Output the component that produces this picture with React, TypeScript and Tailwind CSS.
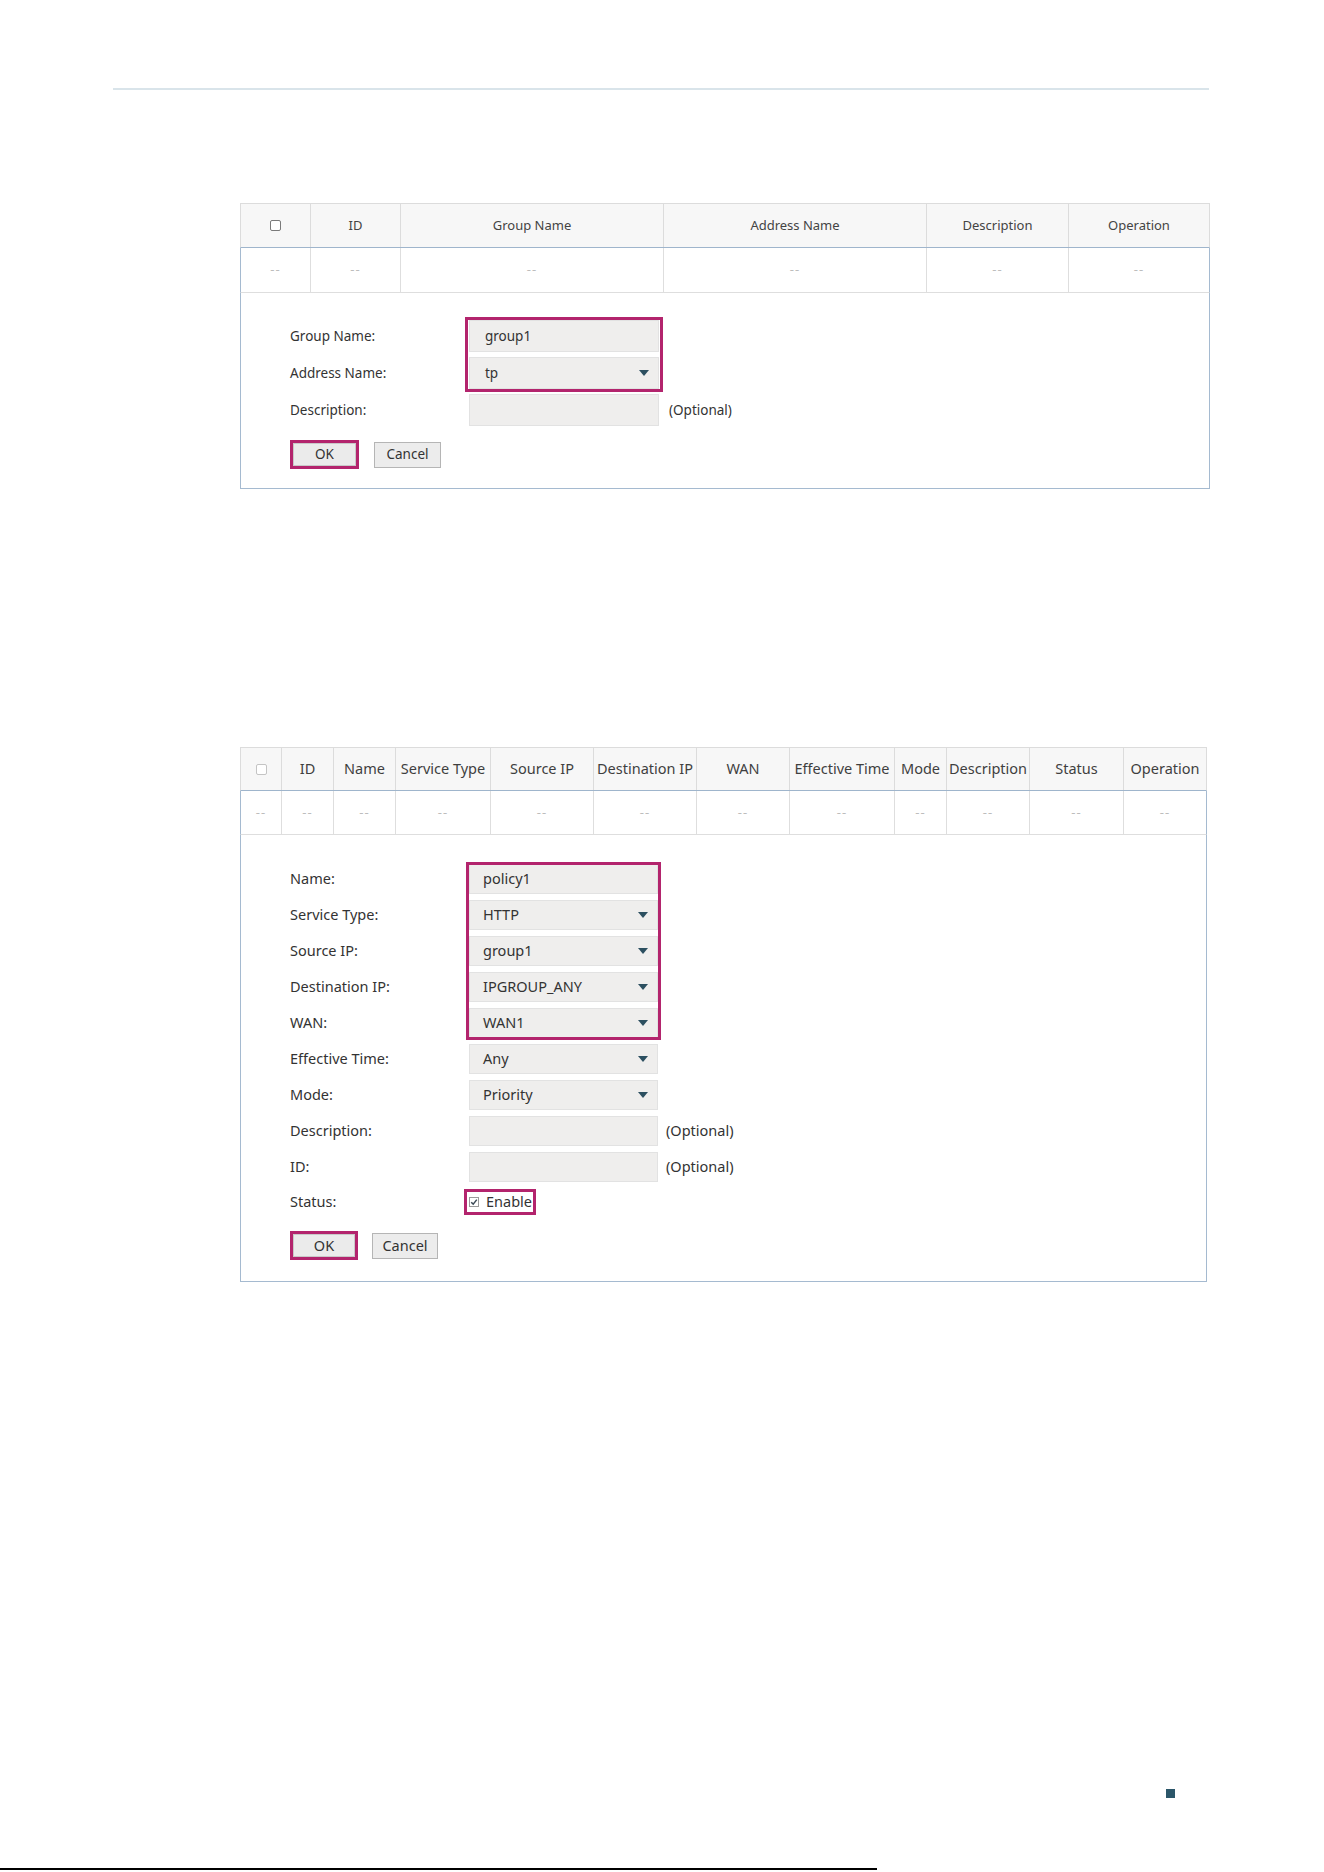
import React from "react";

const PINK = "border-[#b3246d]";

function Caret() {
  return (
    <svg width="10" height="6" viewBox="0 0 10 6" className="shrink-0">
      <polygon points="0,0 10,0 5,6" fill="#2c4f60" />
    </svg>
  );
}

function Field({
  value,
  select,
  w,
  h,
  pl,
}: {
  value?: string;
  select?: boolean;
  w: string;
  h: string;
  pl: string;
}) {
  return (
    <div
      className={`${w} ${h} ${pl} pr-[9px] flex items-center justify-between bg-[#efeeed] border border-[#e2e2e2] text-[#333]`}
    >
      <span>{value ?? ""}</span>
      {select ? <Caret /> : null}
    </div>
  );
}

function Label({ text }: { text: string }) {
  return <div className="flex items-center text-[#333] whitespace-nowrap">{text}</div>;
}

function Buttons({ okW, okH, cW, cH, gap }: { okW: string; okH: string; cW: string; cH: string; gap: string }) {
  return (
    <div className={`flex items-center ${gap}`}>
      <div className={`${okW} ${okH} border-[3px] ${PINK} flex`}>
        <div className="flex-1 flex items-center justify-center bg-[#ebebeb] border border-[#c9c9c9] text-[#333]">
          OK
        </div>
      </div>
      <div
        className={`${cW} ${cH} flex items-center justify-center bg-[#ececec] border border-[#b5b5b5] text-[#333]`}
      >
        Cancel
      </div>
    </div>
  );
}

function HeaderBox({ light }: { light?: boolean }) {
  return (
    <div
      className={`w-[11px] h-[11px] rounded-[2px] bg-white border ${
        light ? "border-[#c4c4c4]" : "border-[#7a7a7a]"
      }`}
    />
  );
}

function Dash() {
  return <span className="tracking-[1px]">--</span>;
}

function AddressGroupTable() {
  const heads = ["ID", "Group Name", "Address Name", "Description", "Operation"];
  return (
    <div className="ml-[240px] mt-[113px] w-[970px] text-[13px]">
      <div className="grid grid-cols-[70px_90px_263px_263px_142px_1fr] h-[45px] border border-[#dcdcdc] border-b-[#9fb5cc] bg-[#f7f7f7] text-[#444]">
        <div className="flex items-center justify-center border-r border-[#dcdcdc]">
          <HeaderBox />
        </div>
        {heads.map((h, i) => (
          <div
            key={h}
            className={`flex items-center justify-center ${i < heads.length - 1 ? "border-r border-[#dcdcdc]" : ""}`}
          >
            {h}
          </div>
        ))}
      </div>
      <div className="grid grid-cols-[70px_90px_263px_263px_142px_1fr] h-[45px] border-x border-b border-x-[#a5bad0] border-b-[#dedede] text-[#bdbdbd] text-[13px]">
        {Array.from({ length: 6 }).map((_, i) => (
          <div
            key={i}
            className={`flex items-center justify-center ${i < 5 ? "border-r border-[#dedede]" : ""}`}
          >
            <Dash />
          </div>
        ))}
      </div>
      <div className="border-x border-b border-[#a5bad0] pl-[49px] pt-[27px] pb-[19px] text-[13.5px]">
        <div className="grid grid-cols-[179px_190px_auto] grid-rows-[32px_32px_32px] gap-y-[5px]">
          <div className="col-start-1 row-start-1 flex"><Label text="Group Name:" /></div>
          <div className="col-start-2 row-start-1"><Field w="w-[190px]" h="h-[32px]" pl="pl-[15px]" value="group1" /></div>
          <div className="col-start-1 row-start-2 flex"><Label text="Address Name:" /></div>
          <div className="col-start-2 row-start-2"><Field w="w-[190px]" h="h-[32px]" pl="pl-[15px]" value="tp" select /></div>
          <div className={`col-start-2 row-start-1 row-span-2 -mx-[4px] -my-[3px] border-[3px] ${PINK} pointer-events-none`} />
          <div className="col-start-1 row-start-3 flex"><Label text="Description:" /></div>
          <div className="col-start-2 row-start-3"><Field w="w-[190px]" h="h-[32px]" pl="pl-[15px]" /></div>
          <div className="col-start-3 row-start-3 flex items-center pl-[10px] text-[#333]">(Optional)</div>
        </div>
        <div className="mt-[14px]">
          <Buttons okW="w-[69px]" okH="h-[29px]" cW="w-[67px]" cH="h-[26px]" gap="gap-[15px]" />
        </div>
      </div>
    </div>
  );
}

function PolicyTable() {
  const heads = [
    "ID",
    "Name",
    "Service Type",
    "Source IP",
    "Destination IP",
    "WAN",
    "Effective Time",
    "Mode",
    "Description",
    "Status",
    "Operation",
  ];
  const cols = "grid-cols-[41px_52px_62px_95px_103px_103px_93px_105px_52px_83px_94px_1fr]";
  const rows: { label: string; value?: string; select?: boolean; optional?: boolean }[] = [
    { label: "Name:", value: "policy1" },
    { label: "Service Type:", value: "HTTP", select: true },
    { label: "Source IP:", value: "group1", select: true },
    { label: "Destination IP:", value: "IPGROUP_ANY", select: true },
    { label: "WAN:", value: "WAN1", select: true },
    { label: "Effective Time:", value: "Any", select: true },
    { label: "Mode:", value: "Priority", select: true },
    { label: "Description:", optional: true },
    { label: "ID:", optional: true },
  ];
  return (
    <div className="ml-[240px] mt-[258px] w-[967px] text-[14.5px]">
      <div className={`grid ${cols} h-[44px] border border-[#dcdcdc] border-b-[#9fb5cc] bg-[#f7f7f7] text-[#3f3f3f]`}>
        <div className="flex items-center justify-center border-r border-[#dcdcdc]">
          <HeaderBox light />
        </div>
        {heads.map((h, i) => (
          <div
            key={h}
            className={`flex items-center justify-center whitespace-nowrap ${
              i < heads.length - 1 ? "border-r border-[#dcdcdc]" : ""
            }`}
          >
            {h}
          </div>
        ))}
      </div>
      <div className={`grid ${cols} h-[44px] border-x border-b border-x-[#a5bad0] border-b-[#dedede] text-[#bdbdbd] text-[13px]`}>
        {Array.from({ length: 12 }).map((_, i) => (
          <div
            key={i}
            className={`flex items-center justify-center ${i < 11 ? "border-r border-[#dedede]" : ""}`}
          >
            <Dash />
          </div>
        ))}
      </div>
      <div className="border-x border-b border-[#a5bad0] pl-[49px] pt-[29px] pb-[21px]">
        <div className="grid grid-cols-[179px_189px_auto] grid-rows-[repeat(9,30px)_28px] gap-y-[6px]">
          {rows.map((r, i) => (
            <React.Fragment key={r.label}>
              <div className="col-start-1 flex" style={{ gridRowStart: i + 1 }}>
                <Label text={r.label} />
              </div>
              <div className="col-start-2" style={{ gridRowStart: i + 1 }}>
                <Field w="w-[189px]" h="h-[30px]" pl="pl-[13px]" value={r.value} select={r.select} />
              </div>
              {r.optional ? (
                <div className="col-start-3 flex items-center pl-[8px] text-[#333]" style={{ gridRowStart: i + 1 }}>
                  (Optional)
                </div>
              ) : null}
            </React.Fragment>
          ))}
          <div className={`col-start-2 row-start-1 row-span-5 -mx-[3px] -my-[2px] border-[3px] ${PINK} pointer-events-none`} />
          <div className="col-start-1 row-start-10 flex">
            <Label text="Status:" />
          </div>
          <div className="col-start-2 row-start-10 flex items-center">
            <div className={`-ml-[5px] h-[26px] flex items-center gap-[7px] border-[3px] ${PINK} pl-[2px] pr-[1px] text-[#333]`}>
              <div className="w-[10px] h-[10px] border border-[#9a9a9a] bg-white flex items-center justify-center">
                <svg width="8" height="8" viewBox="0 0 8 8">
                  <path d="M1.2 4.2 L3.2 6.1 L6.8 1.6" stroke="#3d4b57" strokeWidth="1.5" fill="none" />
                </svg>
              </div>
              <span>Enable</span>
            </div>
          </div>
        </div>
        <div className="mt-[15px]">
          <Buttons okW="w-[68px]" okH="h-[29px]" cW="w-[66px]" cH="h-[26px]" gap="gap-[14px]" />
        </div>
      </div>
    </div>
  );
}

export default function App() {
  return (
    <div
      className="w-[1324px] h-[1872px] bg-white flex flex-col overflow-hidden"
      style={{ fontFamily: '"Noto Sans", "DejaVu Sans", sans-serif' }}
    >
      <div className="mt-[88px] ml-[113px] w-[1096px] h-[2px] bg-[#d9e4ea]" />
      <AddressGroupTable />
      <PolicyTable />
      <div className="mt-[507px] ml-[1166px] w-[9px] h-[9px] bg-[#2b5669]" />
      <div className="mt-[70px] w-[877px] h-[2px] bg-black" />
    </div>
  );
}
